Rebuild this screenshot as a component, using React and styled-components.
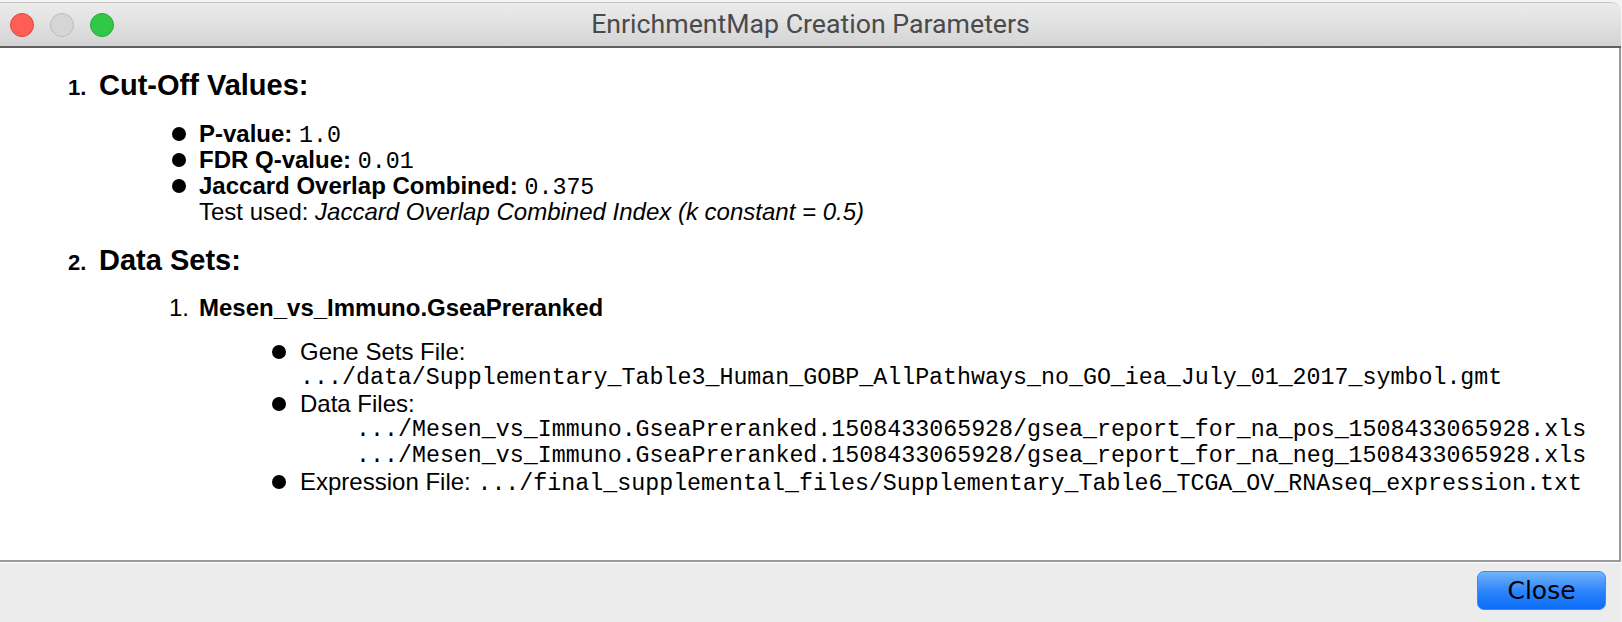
import React from "react";
import styled, { createGlobalStyle } from "styled-components";

const Global = createGlobalStyle`
  html, body { margin: 0; padding: 0; background: #f4f4f4; }
  body { font-family: "Liberation Sans", Arial, sans-serif; color: #000; }
  #root { width: 1622px; height: 622px; overflow: hidden; }
`;

const Window = styled.div`
  margin-top: 2px;
  width: 1621px;
  height: 620px;
  display: flex;
  flex-direction: column;
  background: #fff;
  border-top: 1px solid #c4c4c4;
  border-radius: 0 10px 0 0;
  overflow: hidden;
  box-sizing: border-box;
`;

const TitleBar = styled.div`
  height: 43px;
  flex: none;
  display: grid;
  grid-template-columns: 1fr auto 1fr;
  align-items: center;
  background: linear-gradient(#ececec, #d4d4d4);
  border-bottom: 2px solid #5f5f5f;
`;

const Lights = styled.div`
  display: flex;
  gap: 16px;
  padding-left: 10px;
`;

const Light = styled.span`
  width: 22px;
  height: 22px;
  border-radius: 50%;
  background: ${(p) => p.$fill};
  border: 1px solid ${(p) => p.$edge};
`;

const Title = styled.div`
  font-family: Roboto, "Liberation Sans", sans-serif;
  font-size: 26.7px;
  color: #4a4a4a;
  margin-top: -1px;
`;

const Content = styled.div`
  flex: 1;
  background: #fff;
  border-right: 2px solid #9a9a9a;
  border-bottom: 2px solid #9a9a9a;
  padding: 17px 0 0 68px;
  box-sizing: border-box;
`;

const Divider = styled.div`
  height: 1px;
  flex: none;
  background: #fff;
`;

const Footer = styled.div`
  height: 59px;
  flex: none;
  background: #ececec;
  display: flex;
  justify-content: flex-end;
  align-items: flex-start;
  padding: 8px 15px 0 0;
  box-sizing: border-box;
`;

const CloseButton = styled.button`
  width: 129px;
  height: 39px;
  border-radius: 7px;
  border: 1px solid #3a8af4;
  background: linear-gradient(#70b5fb, #2a82fa 55%, #0b6df8);
  color: #000;
  font-family: "DejaVu Sans", Verdana, sans-serif;
  font-size: 25px;
  padding: 0;
  line-height: 37px;
`;

const Heading = styled.div`
  display: grid;
  grid-template-columns: 31px 1fr;
  align-items: baseline;
  margin-top: ${(p) => p.$top || 0}px;
`;

const HeadNum = styled.span`
  font-weight: bold;
  font-size: 22px;
  line-height: 40px;
`;

const HeadText = styled.span`
  font-weight: bold;
  font-size: 29px;
  line-height: 40px;
`;

const List = styled.div`
  margin-left: ${(p) => p.$indent}px;
  margin-top: ${(p) => p.$top || 0}px;
`;

const Item = styled.div`
  display: grid;
  grid-template-columns: ${(p) => p.$marker}px 1fr;
  font-size: 24px;
  line-height: 26px;
  margin-top: ${(p) => p.$top || 0}px;
`;

const BulletCell = styled.span`
  display: flex;
  align-items: center;
  height: 26px;
`;

const Dot = styled.span`
  width: 14px;
  height: 14px;
  border-radius: 50%;
  background: #000;
`;

const Num = styled.span`
  font-size: 24px;
`;

const Label = styled.b`
  font-weight: bold;
`;

const Mono = styled.span`
  font-family: "Liberation Mono", "Courier New", monospace;
  font-size: 23.3px;
  line-height: 0;
  white-space: pre;
`;

const Em = styled.i`
  font-style: italic;
`;

const PathLine = styled.div`
  font-family: "Liberation Mono", "Courier New", monospace;
  font-size: 23.3px;
  line-height: 26px;
  height: 26px;
  white-space: pre;
  padding-left: ${(p) => p.$indent || 0}px;
`;

const Bullet = ({ children, marker = 27, top }) => (
  <Item $marker={marker} $top={top}>
    <BulletCell>
      <Dot />
    </BulletCell>
    <div>{children}</div>
  </Item>
);

export default function App() {
  return (
    <>
      <Global />
      <Window>
        <TitleBar>
          <Lights>
            <Light $fill="#fd5f57" $edge="#e0443e" />
            <Light $fill="#d5d5d5" $edge="#bcbcbc" />
            <Light $fill="#33c748" $edge="#27a93a" />
          </Lights>
          <Title>EnrichmentMap Creation Parameters</Title>
          <span />
        </TitleBar>
        <Content>
          <Heading>
            <HeadNum>1.</HeadNum>
            <HeadText>Cut-Off Values:</HeadText>
          </Heading>
          <List $indent={104} $top={13}>
            <Bullet>
              <Label>P-value: </Label>
              <Mono>1.0</Mono>
            </Bullet>
            <Bullet>
              <Label>FDR Q-value: </Label>
              <Mono>0.01</Mono>
            </Bullet>
            <Bullet>
              <Label>Jaccard Overlap Combined: </Label>
              <Mono>0.375</Mono>
              <div>
                Test used: <Em>Jaccard Overlap Combined Index (k constant = 0.5)</Em>
              </div>
            </Bullet>
          </List>
          <Heading $top={15}>
            <HeadNum>2.</HeadNum>
            <HeadText>Data Sets:</HeadText>
          </Heading>
          <List $indent={101} $top={12}>
            <Item $marker={30}>
              <Num>1.</Num>
              <div>
                <Label>Mesen_vs_Immuno.GseaPreranked</Label>
                <List $indent={73} $top={18}>
                  <Bullet marker={28}>
                    Gene Sets File:
                    <PathLine>.../data/Supplementary_Table3_Human_GOBP_AllPathways_no_GO_iea_July_01_2017_symbol.gmt</PathLine>
                  </Bullet>
                  <Bullet marker={28}>
                    Data Files:
                    <PathLine $indent={56}>.../Mesen_vs_Immuno.GseaPreranked.1508433065928/gsea_report_for_na_pos_1508433065928.xls</PathLine>
                    <PathLine $indent={56}>.../Mesen_vs_Immuno.GseaPreranked.1508433065928/gsea_report_for_na_neg_1508433065928.xls</PathLine>
                  </Bullet>
                  <Bullet marker={28}>
                    Expression File: <Mono>.../final_supplemental_files/Supplementary_Table6_TCGA_OV_RNAseq_expression.txt</Mono>
                  </Bullet>
                </List>
              </div>
            </Item>
          </List>
        </Content>
        <Divider />
        <Footer>
          <CloseButton>Close</CloseButton>
        </Footer>
      </Window>
    </>
  );
}
